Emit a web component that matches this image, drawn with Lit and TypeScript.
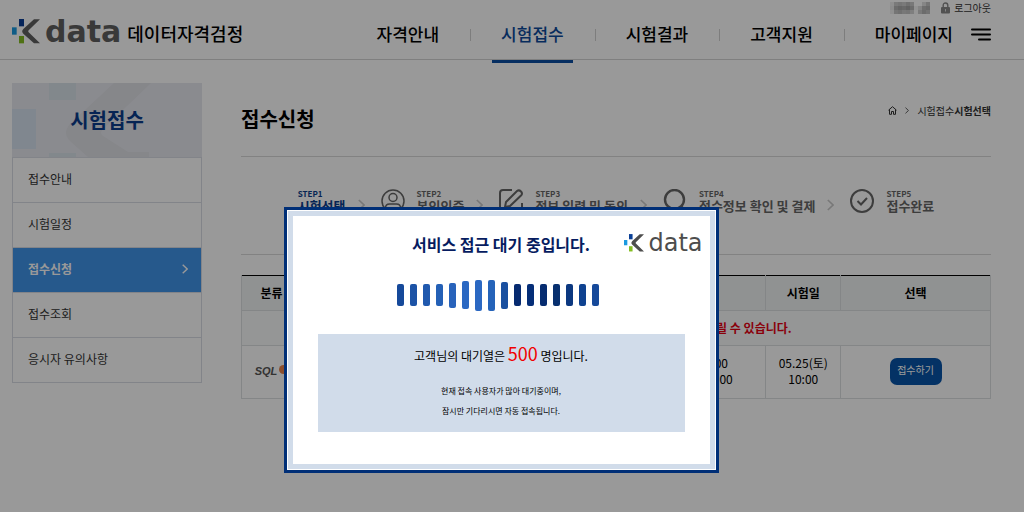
import { LitElement, html, svg, css } from "lit";
import { customElement, property } from "lit/decorators.js";
import { classMap } from "lit/directives/class-map.js";

@customElement("kdata-logo")
class KdataLogo extends LitElement {
  static styles = css`
    :host {
      display: flex;
      align-items: flex-end;
      gap: 5px;
      height: 26px;
      color: #606060;
      font-family: "DejaVu Sans", sans-serif;
      font-size: 30px;
      font-weight: 700;
      line-height: 24px;
    }
    svg {
      display: block;
      width: 28px;
      height: 25px;
    }
    :host([compact]) {
      gap: 4px;
      height: 18px;
      color: #4d4d4d;
      font-size: 24px;
      font-weight: 400;
      line-height: 18px;
    }
    :host([compact]) svg {
      width: 20px;
      height: 18px;
    }
  `;
  @property({ type: Boolean, reflect: true }) compact = false;
  render() {
    return html`<svg viewBox="0 0 84 75" aria-hidden="true">
        <rect x="21" y="0" width="15" height="22" fill="#0a3f96" />
        <rect x="0" y="25" width="14" height="22" fill="#1a9ae0" />
        <rect x="21" y="51" width="15" height="22" fill="#84bd22" />
        <path
          d="M66 1H84L50 34Q47 37 50 40L84 73H66L34 44Q27 37 34 30Z"
          fill="currentColor"
        />
      </svg>
      <span>data</span>`;
  }
}

const menu = ["자격안내", "시험접수", "시험결과", "고객지원", "마이페이지"];
const side = ["접수안내", "시험일정", "접수신청", "접수조회", "응시자 유의사항"];

const icons = [
  null,
  svg`<circle cx="12" cy="12" r="11" /><circle cx="12" cy="8.500" r="4" /><path d="M4.500 20v-1q0-4 4-4h7q4 0 4 4v1" />`,
  svg`<path d="M13 1H4Q1 1 1 4V20Q1 23 4 23H20Q23 23 23 20V14" stroke-width="2" /><path d="M6 18L7 13L18 2Q20 .5 22 2.500Q24 4.500 22 6.500L11 17Z" stroke-width="2" />`,
  svg`<circle cx="11.500" cy="10.500" r="9.500" stroke-width="2.400" /><path d="M18 17L24 24" stroke-width="2.400" />`,
  svg`<circle cx="12" cy="12" r="11" stroke-width="2" /><path d="M7.500 12L11 15.500L17 9" stroke-width="2" />`,
];
const steps = ["시험선택", "본인인증", "정보 입력 및 동의", "접수정보 확인 및 결제", "접수완료"];

const bars = [
  [22, "#16499a"],
  [22, "#1c53a6"],
  [22, "#2059ae"],
  [22, "#2460b6"],
  [25, "#2863bb"],
  [28, "#2b68c2"],
  [31, "#2b68c2"],
  [31, "#2563b9"],
  [27, "#1a50a0"],
  [22, "#062a70"],
  [22, "#052e78"],
  [22, "#062c70"],
  [22, "#08306f"],
  [22, "#0b3880"],
  [22, "#0f4290"],
  [22, "#16499a"],
];

const mosaic = [
  "#eeeeee", "#cccccc", "#c4c4c4", "#cccccc", "#bbbbbb", "#c8c8c8", "#ffffff", "#ffffff", "#e0e0e0", "#c4c4c4",
  "#eaeaea", "#b4b4b4", "#a8a8a8", "#b0b0b0", "#a4a4a4", "#b4b4b4", "#f4f4f4", "#dddddd", "#b8b8b8", "#b0b0b0",
  "#f0f0f0", "#c4c4c4", "#bbbbbb", "#c8c8c8", "#c4c4c4", "#d4d4d4", "#fafafa", "#cccccc", "#b4b4b4", "#c0c0c0",
];

@customElement("app-root")
class AppRoot extends LitElement {
  static styles = css`
    :host {
      display: block;
      min-height: 100vh;
      background: #fff;
      color: #000;
      font-family: "Noto Sans CJK KR", sans-serif;
      font-size: 12px;
      line-height: 16px;
    }
    * {
      box-sizing: border-box;
    }
    a {
      color: inherit;
      text-decoration: none;
    }
    ul,
    ol {
      list-style: none;
      margin: 0;
      padding: 0;
    }
    h1,
    h2,
    p {
      margin: 0;
    }
    svg {
      display: block;
      flex: none;
      fill: none;
    }
    header {
      display: flex;
      justify-content: space-between;
      height: 60px;
      padding: 0 33px 0 12px;
      border-bottom: 1px solid #d4d4d4;
    }
    .brand {
      display: flex;
      align-items: center;
      gap: 6px;
      height: 59px;
      padding-top: 2px;
      font-size: 18px;
      font-weight: 500;
    }
    .brand span {
      padding-top: 4px;
    }
    .right {
      display: flex;
      flex-direction: column;
      align-items: flex-end;
    }
    .user {
      display: flex;
      align-items: center;
      height: 16px;
      font-size: 10px;
      color: #333;
    }
    .name {
      width: 40px;
      height: 12px;
      margin-right: 11px;
    }
    .user a {
      display: flex;
      align-items: center;
      gap: 4px;
    }
    .navrow {
      display: flex;
      align-items: flex-start;
    }
    nav ul {
      display: flex;
    }
    .gnb li {
      display: flex;
      align-items: flex-start;
    }
    .gnb li + li::before {
      content: "";
      width: 1px;
      height: 12px;
      margin: 13px 21px 0 22px;
      background: #d0d0d0;
    }
    .gnb a {
      display: block;
      height: 47px;
      padding: 0 9px;
      font-size: 17px;
      font-weight: 500;
      line-height: 36px;
    }
    .gnb a.on {
      color: #0d4a9c;
      border-bottom: 3px solid #0b4da2;
    }
    .burger {
      width: 20px;
      height: 37px;
      margin-left: 9px;
      padding: 0;
      border: 0;
      background: none;
      color: #000;
    }
    .body {
      display: grid;
      grid-template-columns: 190px minmax(0, 1fr);
      gap: 39px;
      align-items: start;
      padding: 23px 33px 40px 12px;
    }
    .sidehead {
      display: grid;
      height: 74px;
      background: #e7e8ef;
    }
    .sidehead > * {
      grid-area: 1 / 1;
    }
    .sidehead svg {
      width: 100%;
      height: 74px;
    }
    .sidehead h2 {
      place-self: center;
      color: #0b3d8c;
      font-size: 20px;
      font-weight: 700;
      line-height: 28px;
    }
    .lnb ul {
      border: 1px solid #d9dde4;
    }
    .lnb a {
      display: flex;
      align-items: center;
      justify-content: space-between;
      height: 44px;
      padding: 0 13px 2px 15px;
      color: #333;
    }
    .lnb li + li {
      border-top: 1px solid #d9dde4;
    }
    .lnb a.on {
      background: #4094ea;
      color: #fff;
      font-weight: 700;
    }
    .titlebar {
      display: flex;
      align-items: center;
      justify-content: space-between;
      height: 74px;
      padding-bottom: 2px;
      border-bottom: 1px solid #d9d9d9;
    }
    h1 {
      font-size: 20px;
      font-weight: 700;
      line-height: 28px;
    }
    .crumbs {
      display: flex;
      align-items: center;
      height: 16px;
      margin-bottom: 16px;
      font-size: 10px;
      color: #333;
    }
    .crumbs svg + svg {
      margin: 0 8px;
    }
    .steps {
      display: flex;
      justify-content: center;
      height: 98px;
      padding-top: 31px;
      border-bottom: 1px solid #d9d9d9;
      color: #666;
    }
    .steps li {
      display: flex;
      height: 26px;
    }
    .steps .ico {
      width: 24px;
      height: 24px;
      margin: 1px 12px 0 0;
      stroke: #666;
      stroke-width: 1.500;
    }
    .steps .arrow {
      margin: 11px 16px 0 12px;
    }
    .steps small {
      display: block;
      height: 11px;
      font-size: 8px;
      font-weight: 700;
      line-height: 12px;
    }
    .steps b {
      display: block;
      font-size: 13px;
      font-weight: 700;
      line-height: 14px;
      white-space: nowrap;
    }
    .steps .on {
      color: #0b3d8c;
    }
    table {
      width: 100%;
      margin-top: 20px;
      border-collapse: collapse;
      border-top: 1px solid #000;
      table-layout: fixed;
      text-align: center;
    }
    th,
    td {
      height: 35px;
      padding: 0;
      border: 1px solid #dcdfe1;
    }
    th {
      background: #f0f4f4;
      font-weight: 700;
      border-top: 0;
    }
    .notice {
      background: #f8fafa;
      color: #e60012;
      font-weight: 700;
    }
    .row td {
      height: 53px;
      padding-bottom: 2px;
    }
    .sql {
      display: flex;
      align-items: center;
      justify-content: center;
      gap: 2px;
      font: italic 900 11px/12px "Liberation Sans", sans-serif;
      color: #555;
    }
    .dot {
      width: 9px;
      height: 9px;
      border-radius: 5px;
      margin-bottom: 4px;
      background: #e8834a;
    }
    .apply {
      width: 52px;
      height: 27px;
      padding: 0 0 2px;
      border: 0;
      border-radius: 7px;
      background: #0854a8;
      color: #fff;
      font: 400 10px/16px "Noto Sans CJK KR", sans-serif;
      vertical-align: middle;
    }
    .overlay {
      position: fixed;
      inset: 0;
      display: grid;
      justify-items: center;
      align-items: start;
      padding: 207px 22px 0 0;
      background: rgba(0, 0, 0, 0.4);
    }
    .modal {
      position: relative;
      width: 435px;
      max-width: 100%;
      padding: 16px 25px 38px;
      border: 3px solid #002f77;
      outline: 5px solid #d1dcea;
      outline-offset: -9px;
      background: #fff;
      text-align: center;
    }
    .modal kdata-logo {
      position: absolute;
      top: 24px;
      right: 13px;
    }
    .modal h2 {
      color: #061c60;
      font-size: 16px;
      font-weight: 700;
      line-height: 36px;
    }
    .bars {
      display: flex;
      align-items: center;
      justify-content: center;
      gap: 6px;
      height: 32px;
      margin-top: 17px;
      padding-right: 6px;
    }
    .bars i {
      width: 7px;
      border-radius: 2px;
    }
    .box {
      height: 98px;
      margin: 23px 6px 0;
      padding-top: 6px;
      background: #d1dcea;
    }
    .queue {
      line-height: 26px;
    }
    .queue em {
      color: #f00000;
      font-size: 18px;
      font-style: normal;
    }
    .wait {
      margin-top: 12px;
      font-size: 8px;
      line-height: 20px;
    }
  `;

  arrow(cls: string, w: number, h: number, color: string, sw: number) {
    return html`<svg class=${cls} width=${w} height=${h} viewBox="0 0 6 10" stroke=${color} stroke-width=${sw} aria-hidden="true">
      <path d="M.7 .7L5.200 5L.7 9.300" />
    </svg>`;
  }

  render() {
    return html`
      <header>
        <a class="brand" href="#"><kdata-logo></kdata-logo><span>데이터자격검정</span></a>
        <div class="right">
          <div class="user">
            <svg class="name" viewBox="0 0 10 3" preserveAspectRatio="none" shape-rendering="crispEdges" aria-hidden="true">
              ${mosaic.map((c, i) => svg`<rect x=${i % 10} y=${Math.floor(i / 10)} width="1" height="1" fill=${c} />`)}
            </svg>
            <a href="#">
              <svg width="9" height="12" viewBox="0 0 9 12" aria-hidden="true">
                <path d="M2.200 6V3.500Q2.200 1 4.500 1T6.800 3.500V6" stroke="#888" stroke-width="1.400" />
                <rect x="0" y="5" width="9" height="6.500" rx="1" fill="#888" />
                <rect x="4" y="7" width="1" height="2.500" fill="#ddd" />
              </svg>
              로그아웃
            </a>
          </div>
          <div class="navrow">
            <nav class="gnb">
              <ul>
                ${menu.map((m, i) => html`<li><a href="#" class=${classMap({ on: i === 1 })}>${m}</a></li>`)}
              </ul>
            </nav>
            <button class="burger" aria-label="전체메뉴">
              <svg width="20" height="13" viewBox="0 0 20 13" stroke="#000" stroke-width="2" stroke-linecap="round">
                <path d="M1 1.500H19M1 6.500H19M8 11.500H19" />
              </svg>
            </button>
          </div>
        </div>
      </header>

      <div class="body">
        <aside class="lnb">
          <div class="sidehead">
            <svg viewBox="0 0 190 74" preserveAspectRatio="xMinYMin slice" aria-hidden="true">
              <path d="M102 0H139L91 46Q87 50 91 53L116 69H137V74H76L58 58Q50 50 58 41Z" fill="#dfe1e6" />
              <rect x="37" y="0" width="27" height="17" fill="#d9e3ea" />
              <rect x="0" y="26" width="24" height="40" fill="#d5e2ef" />
              <rect x="37" y="70" width="27" height="4" fill="#d9e3ea" />
            </svg>
            <h2>시험접수</h2>
          </div>
          <ul>
            ${side.map(
              (s, i) => html`<li>
                <a href="#" class=${classMap({ on: i === 2 })}>${s}${i === 2 ? this.arrow("", 6, 10, "#fff", 1.4) : ""}</a>
              </li>`
            )}
          </ul>
        </aside>

        <main>
          <div class="titlebar">
            <h1>접수신청</h1>
            <div class="crumbs">
              <svg width="9" height="9" viewBox="0 0 9 9" stroke="#333" aria-hidden="true">
                <path d="M.5 4.200L4.500 .7L8.500 4.200M1.500 3.500V8.300H3.500V5.500H5.500V8.300H7.500V3.500" />
              </svg>
              ${this.arrow("", 4, 7, "#555", 1.4)}
              <a href="#">시험접수</a><strong>시험선택</strong>
            </div>
          </div>
          <ol class="steps">
            ${steps.map(
              (s, i) => html`<li class=${classMap({ on: i === 0 })}>
                ${icons[i] ? html`<svg class="ico" viewBox="0 0 24 24" aria-hidden="true">${icons[i]}</svg>` : ""}
                <span><small>STEP${i + 1}</small><b>${s}</b></span>
                ${i < 4 ? this.arrow("arrow", 7, 12, "#c8c8c8", 1.4) : ""}
              </li>`
            )}
          </ol>
          <table>
            <colgroup>
              <col style="width:8%" />
              <col style="width:41%" />
              <col style="width:21%" />
              <col style="width:10%" />
              <col style="width:20%" />
            </colgroup>
            <thead>
              <tr>
                <th>분류</th>
                <th>시험명</th>
                <th>접수기간</th>
                <th>시험일</th>
                <th>선택</th>
              </tr>
            </thead>
            <tbody>
              <tr>
                <td class="notice" colspan="5">접속자가 많을 경우 접수 화면 연결까지는 다소 시간이 걸릴 수 있습니다.</td>
              </tr>
              <tr class="row">
                <td><div class="sql">SQL<span class="dot"></span></div></td>
                <td>SQL 개발자</td>
                <td>04.22(월) 10:00<br />~ 04.26(금) 18:00</td>
                <td>05.25(토)<br />10:00</td>
                <td><button class="apply">접수하기</button></td>
              </tr>
            </tbody>
          </table>
        </main>
      </div>

      <div class="overlay">
        <section class="modal" role="dialog" aria-modal="true" aria-labelledby="wait-title">
          <kdata-logo compact></kdata-logo>
          <h2 id="wait-title">서비스 접근 대기 중입니다.</h2>
          <div class="bars" aria-hidden="true">
            ${bars.map(([h, c]) => html`<i style="height:${h}px;background:${c}"></i>`)}
          </div>
          <div class="box">
            <p class="queue">고객님의 대기열은 <em>500</em> 명입니다.</p>
            <p class="wait">현재 접속 사용자가 많아 대기중이며,<br />잠시만 기다리시면 자동 접속됩니다.</p>
          </div>
        </section>
      </div>
    `;
  }
}
